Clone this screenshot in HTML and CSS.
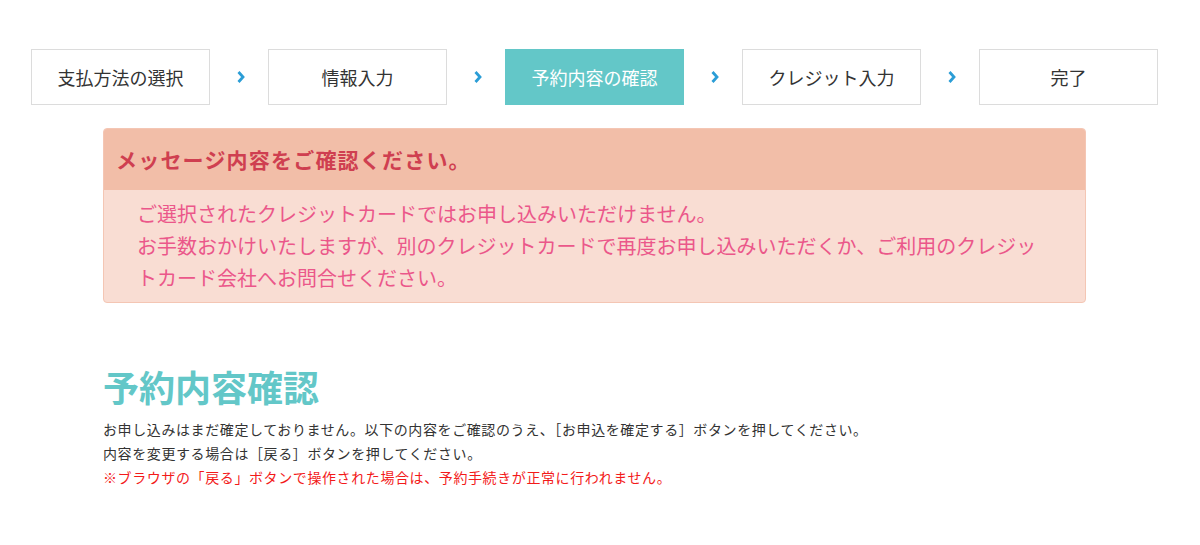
FILE: index.html
```html
<!DOCTYPE html>
<html lang="ja">
<head>
    <meta charset="UTF-8">
    <meta name="viewport" content="width=device-width, initial-scale=1.0">
    <title>予約内容確認</title>
    <link rel="stylesheet" href="styles.css">
</head>
<body>
    <div class="page">
        <ol class="steps">
            <li class="step">支払方法の選択</li>
            <li class="step-arrow"><svg width="10" height="14" viewBox="0 0 10 14"><path d="M2.5 2 L7 7 L2.5 12" fill="none" stroke="#2b9dd6" stroke-width="2.8"/></svg></li>
            <li class="step">情報入力</li>
            <li class="step-arrow"><svg width="10" height="14" viewBox="0 0 10 14"><path d="M2.5 2 L7 7 L2.5 12" fill="none" stroke="#2b9dd6" stroke-width="2.8"/></svg></li>
            <li class="step active">予約内容の確認</li>
            <li class="step-arrow"><svg width="10" height="14" viewBox="0 0 10 14"><path d="M2.5 2 L7 7 L2.5 12" fill="none" stroke="#2b9dd6" stroke-width="2.8"/></svg></li>
            <li class="step">クレジット入力</li>
            <li class="step-arrow"><svg width="10" height="14" viewBox="0 0 10 14"><path d="M2.5 2 L7 7 L2.5 12" fill="none" stroke="#2b9dd6" stroke-width="2.8"/></svg></li>
            <li class="step">完了</li>
        </ol>

        <div class="content">
            <div class="alert">
                <div class="alert-title">メッセージ内容をご確認ください。</div>
                <div class="alert-body">
                    ご選択されたクレジットカードではお申し込みいただけません。<br>
                    お手数おかけいたしますが、別のクレジットカードで再度お申し込みいただくか、ご利用のクレジットカード会社へお問合せください。
                </div>
            </div>

            <h1 class="page-title">予約内容確認</h1>
            <p class="lead">
                お申し込みはまだ確定しておりません。以下の内容をご確認のうえ、［お申込を確定する］ボタンを押してください。<br>
                内容を変更する場合は［戻る］ボタンを押してください。<br>
                <span class="warning">※ブラウザの「戻る」ボタンで操作された場合は、予約手続きが正常に行われません。</span>
            </p>
        </div>
    </div>
</body>
</html>
```

FILE: styles.css
```css
body {
    margin: 0;
    font-family: "Noto Sans CJK JP", "Noto Sans", sans-serif;
    color: #333;
    background: #fff;
}
.page {
    width: 1127px;
    margin-left: 31px;
    padding-top: 49px;
}
.steps {
    display: flex;
    list-style: none;
    margin: 0;
    padding: 0;
}
.step {
    width: 179px;
    height: 56px;
    box-sizing: border-box;
    border: 1px solid #dcdcdc;
    display: flex;
    align-items: center;
    justify-content: center;
    font-size: 18px;
    color: #333;
}
.step.active {
    background-color: #63c7c8;
    border-color: #63c7c8;
    color: #fff;
}
.step-arrow {
    width: 58px;
    display: flex;
    align-items: center;
    justify-content: center;
    padding-left: 3px;
    box-sizing: border-box;
}
.content {
    margin: 23px 72px 0;
}
.alert {
    border: 1px solid #f4c6b4;
    border-radius: 4px;
    overflow: hidden;
    background-color: #f9ddd3;
}
.alert-title {
    background-color: #f2bea8;
    color: #cf3f50;
    font-size: 21px;
    font-weight: bold;
    letter-spacing: 1.2px;
    height: 61px;
    line-height: 61px;
    padding-left: 12px;
}
.alert-body {
    color: #eb578a;
    font-size: 20px;
    line-height: 32px;
    padding: 8px 40px 8px 33px;
}
.page-title {
    margin: 61px 0 0;
    font-size: 36px;
    line-height: 44px;
    color: #63c7c8;
    font-weight: bold;
}
.lead {
    margin: 9px 0 0;
    font-size: 14px;
    line-height: 24px;
    letter-spacing: 0.6px;
    color: #333;
}
.warning {
    color: #f31a1a;
}
```
